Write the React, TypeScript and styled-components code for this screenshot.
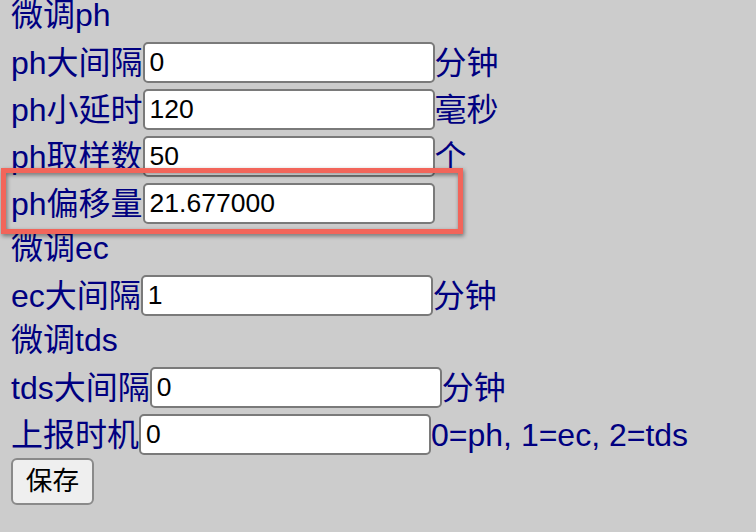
import React from "react";
import styled, { createGlobalStyle } from "styled-components";

const Global = createGlobalStyle`
  html, body {
    margin: 0;
    padding: 0;
    background: #cccccc;
  }
  body {
    font-family: "Liberation Sans", "Noto Sans CJK SC", sans-serif;
    overflow: hidden;
  }
`;

const Page = styled.form`
  padding: 0 0 0 11px;
  color: #000080;
  font-family: "Liberation Sans", "Noto Sans CJK SC", sans-serif;
  font-size: 32px;
`;

const Heading = styled.div<{ $compact?: boolean }>`
  height: ${(p) => (p.$compact ? "39px" : "45px")};
  line-height: ${(p) => (p.$compact ? "30px" : "42px")};
  white-space: nowrap;
`;

const Row = styled.div`
  position: relative;
  display: flex;
  align-items: center;
  height: 47px;
  white-space: nowrap;
`;

const Label = styled.span`
  line-height: 1;
`;

const Unit = styled.span`
  line-height: 1;
`;

const Field = styled.input`
  box-sizing: border-box;
  width: 292px;
  height: 41px;
  margin: 0;
  padding: 0 5px;
  border: 2px solid #7a7a7a;
  border-radius: 5px;
  background: #ffffff;
  color: #000000;
  font-family: "Liberation Sans", "Noto Sans CJK SC", sans-serif;
  font-size: 26.5px;
  outline: none;
`;

const Highlight = styled.div`
  position: absolute;
  left: -10px;
  top: -12px;
  width: 462px;
  height: 66px;
  box-sizing: border-box;
  border: 5px solid #f2655a;
  filter: drop-shadow(1px 2px 2px rgba(0, 0, 0, 0.45));
  pointer-events: none;
`;

const SaveButton = styled.button`
  box-sizing: border-box;
  width: 83px;
  height: 47px;
  margin: 0;
  padding: 0;
  border: 2px solid #8a8a8a;
  border-radius: 6px;
  background: #efefef;
  color: #000000;
  font-family: "Liberation Sans", "Noto Sans CJK SC", sans-serif;
  font-size: 26.67px;
  line-height: 1;
`;

type Item = {
  label: string;
  value: string;
  unit: string;
  highlight?: boolean;
};

const Section: React.FC<{ title: string; items: Item[]; compact?: boolean }> = ({
  title,
  items,
  compact,
}) => (
  <>
    <Heading $compact={compact}>{title}</Heading>
    {items.map((it) => (
      <Row key={it.label}>
        <Label>{it.label}</Label>
        <Field type="text" defaultValue={it.value} />
        <Unit>{it.unit}</Unit>
        {it.highlight && <Highlight />}
      </Row>
    ))}
  </>
);

export default function App() {
  return (
    <>
      <Global />
      <Page onSubmit={(e) => e.preventDefault()}>
        <Section
          compact
          title="微调ph"
          items={[
            { label: "ph大间隔", value: "0", unit: "分钟" },
            { label: "ph小延时", value: "120", unit: "毫秒" },
            { label: "ph取样数", value: "50", unit: "个" },
            { label: "ph偏移量", value: "21.677000", unit: "", highlight: true },
          ]}
        />
        <Section
          title="微调ec"
          items={[{ label: "ec大间隔", value: "1", unit: "分钟" }]}
        />
        <Section
          title="微调tds"
          items={[
            { label: "tds大间隔", value: "0", unit: "分钟" },
            { label: "上报时机", value: "0", unit: "0=ph, 1=ec, 2=tds" },
          ]}
        />
        <SaveButton type="submit">保存</SaveButton>
      </Page>
    </>
  );
}
